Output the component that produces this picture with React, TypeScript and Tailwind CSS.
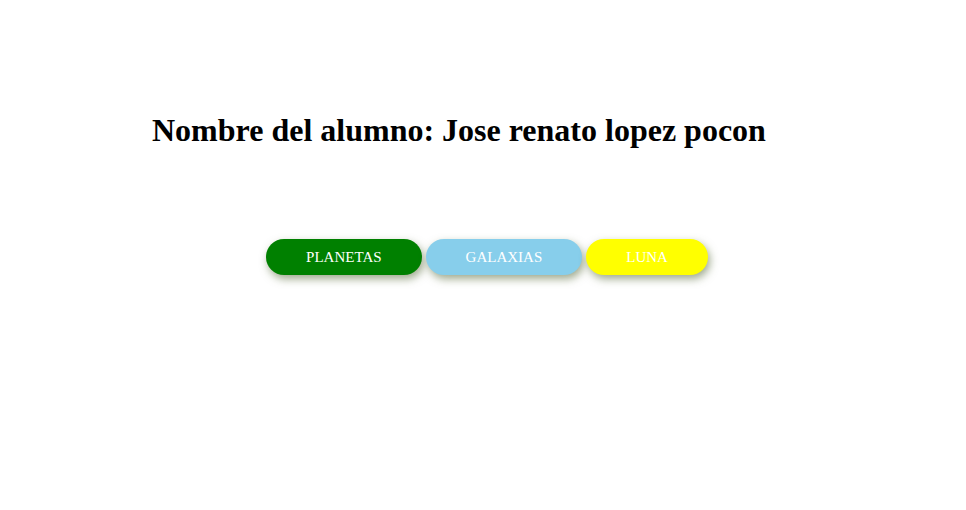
export default function App() {
  const buttons = [
    { label: "PLANETAS", color: "bg-[#008000]" },
    { label: "GALAXIAS", color: "bg-[#87ceeb]" },
    { label: "LUNA", color: "bg-[#ffff00]" },
  ];

  return (
    <div className="min-h-[510px] w-full bg-white font-['Liberation_Serif',serif] text-black">
      <h1 className="pt-[112px] pl-[152px] text-[32px] font-bold leading-[37px]">
        Nombre del alumno: Jose renato lopez pocon
      </h1>

      <div className="mt-[90px] flex justify-center gap-[4px] pl-[8px]">
        <button className="flex h-9 items-center rounded-full bg-[#008000] px-10 pt-px text-[15px] text-white shadow-[2px_4px_8px_rgba(80,100,50,0.55)]">
          {buttons[0].label}
        </button>
        <button className="flex h-9 items-center rounded-full bg-[#87ceeb] px-10 pt-px text-[15px] text-white shadow-[2px_4px_8px_rgba(80,100,50,0.55)]">
          {buttons[1].label}
        </button>
        <button className="flex h-9 items-center rounded-full bg-[#ffff00] px-10 pt-px text-[15px] text-white shadow-[2px_4px_8px_rgba(80,100,50,0.55)]">
          {buttons[2].label}
        </button>
      </div>
    </div>
  );
}
